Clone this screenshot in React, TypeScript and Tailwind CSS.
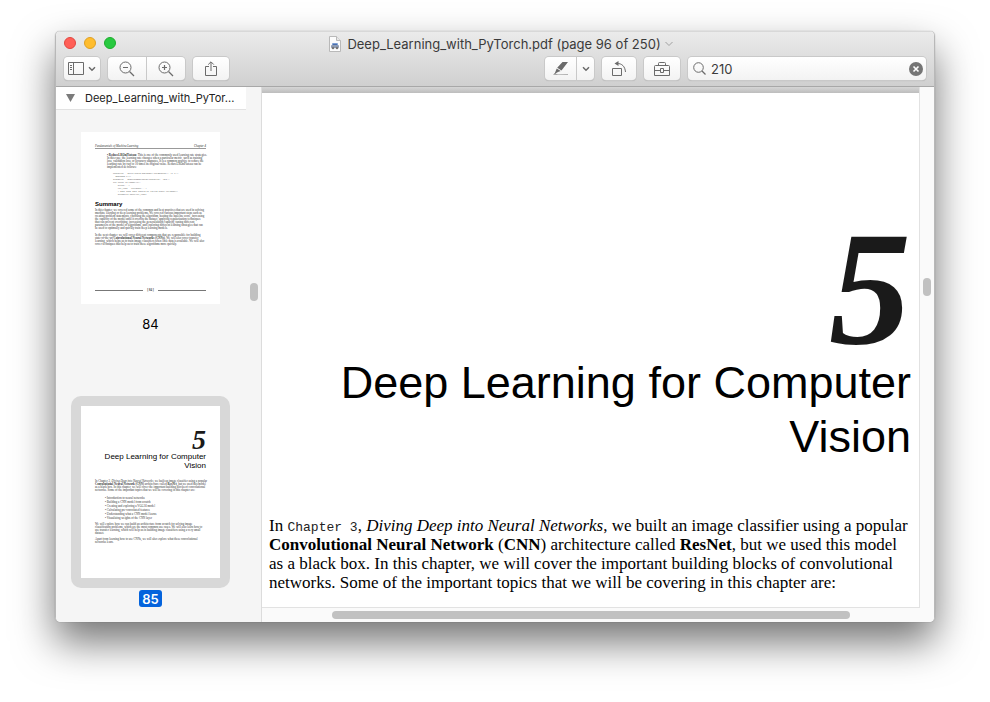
import React from "react";

const toolButton =
  "flex h-[23px] items-center justify-center bg-gradient-to-b from-white to-[#f3f3f3] text-[#6b6b6b] shadow-[0_0_0_1px_#c9c9c9,0_1px_1px_#a9a9a9]";

function Chevron({ className }: { className: string }) {
  return (
    <svg className={className} width="8" height="6" viewBox="0 0 8 6" fill="none" stroke="currentColor">
      <path d="M.5 1 4 4.500 7.500 1" />
    </svg>
  );
}

function Magnifier({ plus }: { plus: boolean }) {
  return (
    <svg width="16" height="16" viewBox="0 0 16 16" fill="none" stroke="currentColor">
      <circle cx="6.5" cy="6.5" r="5.5" />
      <path d="M10.5 10.5 15 15" strokeWidth="1.3" />
      <path d="M4 6.5h5" strokeWidth="1.2" />
      {plus && <path d="M6.5 4v5" strokeWidth="1.2" />}
    </svg>
  );
}

function TitleBar() {
  return (
    <div className="relative flex h-[23px] items-center justify-center">
      <div className="absolute left-2 top-[5px] flex gap-2">
        <button aria-label="Close" className="size-3 rounded-full border border-[#e2463f] bg-[#ff5f57]" />
        <button aria-label="Minimize" className="size-3 rounded-full border border-[#dfa023] bg-[#ffbd2e]" />
        <button aria-label="Zoom" className="size-3 rounded-full border border-[#1dad2b] bg-[#28c940]" />
      </div>
      <svg className="mr-[6px]" width="12" height="16" viewBox="0 0 12 16">
        <path d="M.5.5h7l4 4v11H.5z" fill="#fcfcfc" stroke="#b9b9b9" />
        <path d="M7.5.5v4h4" fill="#e8e8e8" stroke="#b9b9b9" />
        <rect x="3" y="7" width="6" height="3" rx="1" fill="#7d9fd3" />
        <rect x="2" y="9" width="8" height="3" rx="1" fill="#8f9db5" />
        <rect x="4" y="8" width="4" height="1" fill="#4a6fae" />
        <circle cx="4" cy="12" r="1.3" fill="#777" />
        <circle cx="8" cy="12" r="1.3" fill="#777" />
      </svg>
      <h1 className="relative text-[13px] leading-4 text-[#3a3a3a]">
        Deep_Learning_with_PyTorch.pdf (page 96 of 250)
        <Chevron className="absolute -right-3 top-[5px] text-[#a0a0a0]" />
      </h1>
    </div>
  );
}

function Toolbar() {
  return (
    <div className="flex items-center gap-2 px-2 pt-[2px]">
      <button aria-label="Sidebar view" className={`${toolButton} w-9 gap-1 rounded`}>
        <svg width="16" height="13" viewBox="0 0 16 13" fill="none" stroke="currentColor">
          <path d="M.5.5h15v12H.5zM5.5.5v12M2 3.5h2M2 5.5h2M2 7.5h2" />
        </svg>
        <svg width="8" height="6" viewBox="0 0 8 6" fill="none" stroke="currentColor" strokeWidth="1.5">
          <path d="M1 1.2 4 4.2 7 1.2" />
        </svg>
      </button>
      <div className="flex gap-px">
        <button aria-label="Zoom out" className={`${toolButton} w-[38px] rounded-l`}>
          <Magnifier plus={false} />
        </button>
        <button aria-label="Zoom in" className={`${toolButton} w-[38px] rounded-r`}>
          <Magnifier plus />
        </button>
      </div>
      <button aria-label="Share" className={`${toolButton} w-9 rounded`}>
        <svg width="12" height="16" viewBox="0 0 12 16" fill="none" stroke="currentColor">
          <path d="M4 5.5H.5v9h11v-9H8M6 10V1M3.2 3.6 6 .8l2.800 2.800" />
        </svg>
      </button>
      <div className="flex-1" />
      <div className="flex gap-px">
        <button aria-label="Highlight" className={`${toolButton} w-[31px] rounded-l`}>
          <svg width="16" height="13" viewBox="0 0 16 13" fill="currentColor">
            <path d="M9.500 0h5.500L8.500 8.500 4.200 5.800zM3.700 6.500l4 2.600-2.700 1-3.500 2zM0 12.600l1.500-1 3.500.6 10 .1v.5z" />
          </svg>
        </button>
        <button aria-label="Highlight colour" className={`${toolButton} w-[17px] rounded-r`}>
          <svg width="8" height="6" viewBox="0 0 8 6" fill="none" stroke="currentColor" strokeWidth="1.5">
            <path d="M1 1.2 4 4.2 7 1.2" />
          </svg>
        </button>
      </div>
      <button aria-label="Rotate" className={`${toolButton} w-[34px] rounded`}>
        <svg width="16" height="16" viewBox="0 0 16 16" fill="none" stroke="currentColor">
          <path d="M1.500 7.500h9v7h-9zM6 2.500c5-.2 8 3 8.500 8.500" />
          <path d="M7.500 0v5L3.500 2.500z" fill="currentColor" stroke="none" />
        </svg>
      </button>
      <button aria-label="Markup toolbar" className={`${toolButton} w-9 rounded`}>
        <svg width="18" height="14" viewBox="0 0 18 14" fill="none" stroke="currentColor">
          <path d="M1.500 4.500Q1.500 3.500 2.500 3.500h13q1 0 1 1v9h-15zM5.500 3.500v-2q0-1 1-1h5q1 0 1 1v2M1.500 8.500H7.500M10.500 8.500h6M7.500 6.500h3v4h-3z" />
        </svg>
      </button>
      <label className={`${toolButton} w-[238px] gap-1 rounded px-[3px] pl-[5px]`}>
        <svg className="shrink-0" width="13" height="13" viewBox="0 0 13 13" fill="none" stroke="currentColor">
          <circle cx="5.500" cy="5.500" r="4.800" />
          <path d="m9 9 3.500 3.500" strokeWidth="1.200" />
        </svg>
        <input
          aria-label="Search"
          defaultValue="210"
          className="min-w-0 flex-1 bg-transparent pl-px text-[13px] leading-4 text-[#3c3c3c] outline-none"
        />
        <button aria-label="Clear search" className="shrink-0">
          <svg width="14" height="14" viewBox="0 0 14 14">
            <circle cx="7" cy="7" r="7" fill="#757575" />
            <path d="m4.500 4.500 5 5m0-5-5 5" stroke="#fff" strokeWidth="1.600" />
          </svg>
        </button>
      </label>
    </div>
  );
}

function SummaryThumb() {
  return (
    <div className="h-[172px] w-[139px] overflow-hidden whitespace-nowrap bg-white px-[14px] pt-[13px] font-['Liberation_Serif',serif] text-[3px] leading-[3px] text-[#333]">
      <div className="flex justify-between border-b border-[#999]">
        <i>Fundamentals of Machine Learning</i>
        <i>Chapter 4</i>
      </div>
      <p className="mt-[5px] pl-3">
        <b>• ReduceLROnPlateau</b>: This is one of the commonly used learning rate strategies.
        <br />In this case, the learning rate changes when a particular metric, such as training
        <br />loss, validation loss, or accuracy stagnates. It is a common practice to reduce the
        <br />learning rate by two to 10 times its original value. ReduceLROnPlateau can be
        <br />implemented as follows:
      </p>
      <pre className="mt-[3px] pl-[18px] font-['Liberation_Mono',monospace] text-[2px] leading-[3px] text-[#555]">
        {`optimizer = torch.optim.SGD(model.parameters(), lr=0.1,
  momentum=0.9)
scheduler = ReduceLROnPlateau(optimizer, 'min')
for epoch in range(10):
    train(...)
    val_loss = validate(...)
    # Note that step should be called after validate()
    scheduler.step(val_loss)`}
      </pre>
      <h2 className="mt-[6px] font-['Liberation_Sans',sans-serif] text-[6px] font-bold leading-[5px] text-black">Summary</h2>
      <p className="mt-[2px]">
        In this chapter, we covered some of the common and best practices that are used in solving
        <br />machine learning or deep learning problems. We covered various important steps such as
        <br />creating problem statements, choosing the algorithm, beating the baseline score, increasing
        <br />the capacity of the model until it overfits the dataset, applying regularization techniques
        <br />that can prevent overfitting, increasing the generalization capacity, tuning different
        <br />parameters of the model or algorithms, and exploring different learning strategies that can
        <br />be used to optimally and quickly train deep learning models.
      </p>
      <p className="mt-1">
        In the next chapter, we will cover different components that are responsible for building
        <br />state-of-the-art <b>Convolutional Neural Networks (CNNs)</b>. We will also cover transfer
        <br />learning, which helps us to train image classifiers when little data is available. We will also
        <br />cover techniques that help us to train these algorithms more quickly.
      </p>
      <div className="mt-[43px] flex items-center gap-1">
        <span className="h-px flex-1 bg-[#777]" />
        <b>[ 84 ]</b>
        <span className="h-px flex-1 bg-[#777]" />
      </div>
    </div>
  );
}

function ChapterThumb() {
  return (
    <div className="h-[172px] w-[139px] overflow-hidden whitespace-nowrap bg-white px-[14px] pt-[22px] font-['Liberation_Serif',serif] text-[3px] leading-[3px] text-[#333]">
      <div className="text-right text-[28px] font-bold italic leading-6 text-[#1a1a1a]">5</div>
      <h2 className="text-right font-['Liberation_Sans',sans-serif] text-[8px] leading-[9px] text-black">
        Deep Learning for Computer
        <br />Vision
      </h2>
      <p className="mt-[10px]">
        In Chapter 3, <i>Diving Deep into Neural Networks</i>, we built an image classifier using a popular
        <br /><b>Convolutional Neural Network (CNN)</b> architecture called <b>ResNet</b>, but we used this model
        <br />as a black box. In this chapter, we will cover the important building blocks of convolutional
        <br />networks. Some of the important topics that we will be covering in this chapter are:
      </p>
      <ul className="mt-1 pl-[10px] leading-[4px]">
        <li>• Introduction to neural networks</li>
        <li>• Building a CNN model from scratch</li>
        <li>• Creating and exploring a VGG16 model</li>
        <li>• Calculating pre-convoluted features</li>
        <li>• Understanding what a CNN model learns</li>
        <li>• Visualizing weights of the CNN layer</li>
      </ul>
      <p className="mt-[3px]">
        We will explore how we can build an architecture from scratch for solving image
        <br />classification problems, which are the most common use cases. We will also learn how to
        <br />use transfer learning, which will help us in building image classifiers using a very small
        <br />dataset.
      </p>
      <p className="mt-[3px]">
        Apart from learning how to use CNNs, we will also explore what these convolutional
        <br />networks learn.
      </p>
    </div>
  );
}

function Sidebar() {
  return (
    <aside className="relative flex w-[206px] shrink-0 flex-col overflow-hidden border-r border-[#dcdcdc] bg-[#f5f5f5]">
      <button className="mr-[15px] flex h-[23px] shrink-0 items-center border-b border-[#e2e2e2] bg-white pl-[10px] text-left text-[11px] text-[#222]">
        <svg className="mr-[10px]" width="9" height="8" viewBox="0 0 9 8">
          <path d="M0 0h9L4.500 8z" fill="#7b7b7b" />
        </svg>
        Deep_Learning_with_PyTor...
      </button>
      <div className="flex w-[189px] flex-col items-center pt-[22px] text-[13px] leading-4 text-black">
        <SummaryThumb />
        <span className="mt-3">84</span>
        <div className="mt-16 rounded-[10px] bg-[#d8d8d8] p-[10px]">
          <ChapterThumb />
        </div>
        <span className="mt-[2px] rounded-[3px] bg-[#0463dc] px-[3px] pt-px font-semibold text-white">85</span>
      </div>
      <div className="absolute right-[3px] top-[196px] h-[18px] w-2 rounded-full bg-[#c1c1c1]" />
    </aside>
  );
}

function Document() {
  return (
    <main className="grid min-w-0 flex-1 grid-cols-[minmax(0,1fr)_14px] grid-rows-[minmax(0,1fr)_14px] bg-[#fafafa]">
      <article className="overflow-hidden border-b border-r border-[#e2e2e2] bg-white">
        <div className="h-[6px] bg-gradient-to-b from-[#d6d6d6] to-[#bdbdbd]" />
        <div className="flex flex-col whitespace-nowrap pl-[7px] pr-2 text-black">
          <div className="mt-[127px] self-end font-['Liberation_Serif',serif] text-[164px] font-bold italic leading-[136px] text-[#1a1a1a]">
            5
          </div>
          <h2 className="self-end text-right font-['Liberation_Sans',Arial,sans-serif] text-[45px] leading-[54px]">
            Deep Learning for Computer
            <br />
            Vision
          </h2>
          <p className="mt-[52px] font-['Palatino','Liberation_Serif',serif] text-[17px] leading-[19px]">
            In <span className="font-['Liberation_Mono',monospace] text-[13px] leading-none text-[#222]">Chapter 3</span>,{" "}
            <i>Diving Deep into Neural Networks</i>, we built an image classifier using a popular
            <br />
            <b>Convolutional Neural Network</b> (<b>CNN</b>) architecture called <b>ResNet</b>, but we used this model
            <br />
            as a black box. In this chapter, we will cover the important building blocks of convolutional
            <br />
            networks. Some of the important topics that we will be covering in this chapter are:
          </p>
        </div>
      </article>
      <div className="flex justify-center pt-[191px]">
        <div className="h-[18px] w-2 rounded-full bg-[#c1c1c1]" />
      </div>
      <div className="px-[70px] pt-[3px]">
        <div className="h-2 rounded-full bg-[#c1c1c1]" />
      </div>
    </main>
  );
}

export default function App() {
  return (
    <div className="flex h-screen overflow-hidden bg-white px-[55px] pb-20 pt-[31px] font-['Inter',sans-serif]">
      <div className="flex min-w-0 flex-1 flex-col overflow-hidden rounded-[5px] border-x border-[#b8b8b8] shadow-[0_0_1px_rgba(0,0,0,0.4),0_20px_40px_rgba(0,0,0,0.55)]">
        <header className="h-14 shrink-0 border-b border-[#a8a8a8] border-t border-t-[#d8d8d8] bg-gradient-to-b from-[#ebebeb] to-[#d0d0d0]">
          <TitleBar />
          <Toolbar />
        </header>
        <div className="flex min-h-0 flex-1">
          <Sidebar />
          <Document />
        </div>
      </div>
    </div>
  );
}
